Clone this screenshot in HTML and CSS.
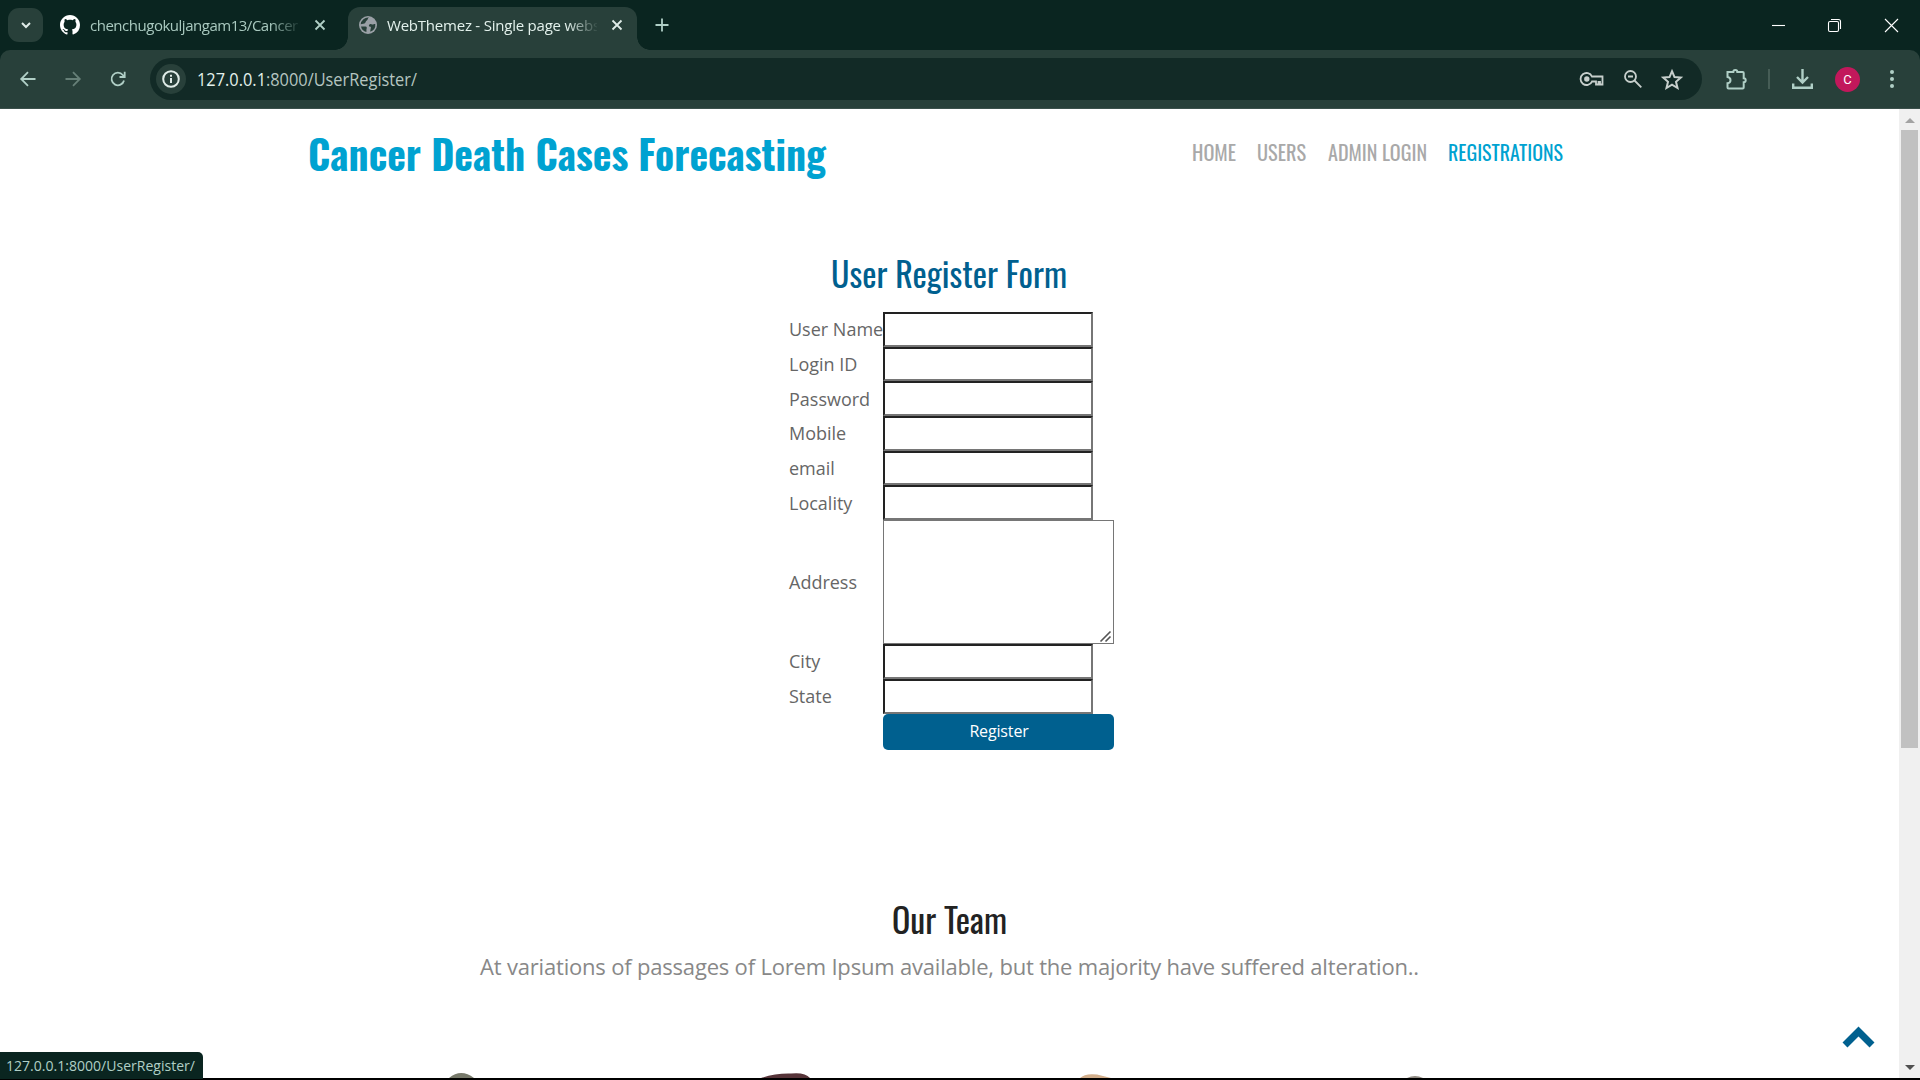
FILE: index.html
```html
<!DOCTYPE html>
<html lang="en">
<head>
<meta charset="utf-8">
<title>WebThemez - Single page website</title>
<link rel="stylesheet" href="styles.css">
</head>
<body>
<div class="window">
  <header class="tabstrip">
    <div class="tab-search"><svg width="12" height="12" viewBox="0 0 12 12"><path d="M2 4l4 4 4-4" class="line light w2"/></svg></div>
    <div class="tab">
      <svg class="favicon" width="20" height="20" viewBox="0 0 16 16"><path fill="#fff" d="M8 0C3.58 0 0 3.58 0 8c0 3.54 2.29 6.53 5.47 7.59.4.07.55-.17.55-.38 0-.19-.01-.82-.01-1.49-2.01.37-2.53-.49-2.69-.94-.09-.23-.48-.94-.82-1.13-.28-.15-.68-.52-.01-.53.63-.01 1.08.58 1.23.82.72 1.21 1.87.87 2.33.66.07-.52.28-.87.51-1.07-1.78-.2-3.64-.89-3.64-3.95 0-.87.31-1.59.82-2.15-.08-.2-.36-1.02.08-2.12 0 0 .67-.21 2.2.82.64-.18 1.32-.27 2-.27s1.36.09 2 .27c1.53-1.04 2.2-.82 2.2-.82.44 1.1.16 1.92.08 2.12.51.56.82 1.27.82 2.15 0 3.07-1.87 3.75-3.65 3.95.29.25.54.73.54 1.48 0 1.07-.01 1.93-.01 2.2 0 .21.15.46.55.38A8.01 8.01 0 0 0 16 8c0-4.42-3.58-8-8-8z"/></svg>
      <span class="tab-title first">chenchugokuljangam13/Cancer</span>
      <svg class="close" width="12" height="12" viewBox="0 0 12 12"><path d="M1.5 1.5l9 9M10.5 1.5l-9 9" class="line mint"/></svg>
    </div>
    <div class="tab active">
      <svg class="favicon" width="18" height="18" viewBox="0 0 18 18"><circle cx="9" cy="9" r="9" fill="#9aa0a6"/><path d="M10 1.6c-1.8 1-.8 2.300-2.500 3.200-1 .6-.6 2.200-2 2.600L1.700 8.300A7.400 7.400 0 0 1 10 1.600zM2 10.500h4.500c1.500.2 1.500 1.600 1 2.600-.3 1 .3 1.900-.2 3A7.400 7.400 0 0 1 2 10.500zM16.300 8c-1.400-.5-2 1-3.500.4-1.200-.6-2.300-.2-2.900.8-.2 1.300.9 1.400 1.900 1.600.5 1.500-.7 2.700-.5 4.900A7.400 7.400 0 0 0 16.300 8z" fill="#28403a"/></svg>
      <span class="tab-title">WebThemez - Single page website</span>
      <svg class="close" width="12" height="12" viewBox="0 0 12 12"><path d="M1.500 1.500l9 9M10.500 1.500l-9 9" class="line light"/></svg>
    </div>
    <svg class="new-tab" width="14" height="14" viewBox="0 0 14 14"><path d="M7 .5v13M.5 7h13" class="line mint"/></svg>
    <div class="window-controls">
      <svg width="13" height="13" viewBox="0 0 13 13"><path d="M0 6.500h13" class="line white w1"/></svg>
      <svg width="13" height="13" viewBox="0 0 13 13"><rect x=".5" y="2.500" width="10" height="10" rx="1.500" class="line white w1"/><path d="M3 .5h7.500a2 2 0 0 1 2 2V10" class="line white w1"/></svg>
      <svg width="13" height="13" viewBox="0 0 13 13"><path d="M0 0l13 13M13 0L0 13" class="line white w1"/></svg>
    </div>
  </header>

  <div class="toolbar">
    <div class="nav-buttons">
      <svg width="16" height="16" viewBox="0 0 16 16"><path d="M15.500 8H1.500M8 1.200L1.200 8 8 14.800" class="line mint"/></svg>
      <svg width="16" height="16" viewBox="0 0 16 16"><path d="M.5 8h14M8 1.200L14.800 8 8 14.800" class="line dim"/></svg>
      <svg width="16" height="16" viewBox="0 0 16 16"><path d="M14 9.500A6.300 6.300 0 1 1 12.800 4L14.500 6M14.700 .8V6H9.500" class="line mint"/></svg>
    </div>
    <div class="omnibox">
      <div class="site-info"><svg width="18" height="18" viewBox="0 0 18 18"><circle cx="9" cy="9" r="7.800" class="line light w2"/><path d="M9 8v5M9 4.700v2" class="line light w2"/></svg></div>
      <svg class="url" width="222" height="30"><text x="0" y="22" textLength="220" lengthAdjust="spacingAndGlyphs"><tspan fill="#e3f1ec">127.0.0.1</tspan>:8000/UserRegister/</text></svg>
      <div class="omni-icons">
        <svg width="24" height="16" viewBox="0 0 24 16"><path d="M12 5.500A6 6 0 1 0 12 10.500H16V13.500H18.500V11H20V13.500H22.500V5.500Z" class="line grey"/><circle cx="6.800" cy="8" r="2.700" fill="#c7cfcc"/></svg>
        <svg width="18" height="18" viewBox="0 0 18 18"><circle cx="6.500" cy="6.500" r="5.500" class="line grey"/><path d="M10.500 10.500l6.800 6.800M4 6.500h5" class="line grey"/></svg>
        <svg width="22" height="21" viewBox="0 0 22 21"><path d="M11 2.200l2.500 5.900 6.300.5-4.800 4.200 1.500 6.200-5.500-3.300L5.500 19 7 12.800 2.200 8.600l6.300-.5z" class="line grey w2"/></svg>
      </div>
    </div>
    <div class="actions">
      <svg width="21" height="21" viewBox="0 0 21 21"><path d="M1.500 3h5.800a2 2 0 0 1 4 0h5.400a1 1 0 0 1 1 1v5.200a2 2 0 0 1 0 4V18.500a1 1 0 0 1-1 1H2.500a1 1 0 0 1-1-1V14.200c4-.5 4-5.500 0-6.200V3z" class="line mint w2"/></svg>
      <i class="divider"></i>
      <svg width="21" height="21" viewBox="0 0 21 21"><path d="M10.500 0v13M5 8l5.500 5.500L16 8M1.200 14.500v4.300h18.600v-4.300" class="line mint w25"/></svg>
      <div class="avatar">C</div>
      <svg width="4" height="18" viewBox="0 0 4 18"><g fill="#b0cfc6"><circle cx="2" cy="2" r="2"/><circle cx="2" cy="9" r="2"/><circle cx="2" cy="16" r="2"/></g></svg>
    </div>
  </div>

  <div class="viewport">
    <main class="page">
      <div class="site-header">
        <svg class="brand" width="520" height="60"><text x="-1" y="42" textLength="518" lengthAdjust="spacingAndGlyphs">Cancer Death Cases Forecasting</text></svg>
        <nav class="menu">
          <svg width="43" height="30"><text x="-1" y="22" textLength="44" lengthAdjust="spacingAndGlyphs">HOME</text></svg>
          <svg width="48" height="30"><text x="-1" y="22" textLength="49" lengthAdjust="spacingAndGlyphs">USERS</text></svg>
          <svg width="98" height="30"><text x="-1" y="22" textLength="99" lengthAdjust="spacingAndGlyphs">ADMIN LOGIN</text></svg>
          <svg class="current" width="115" height="30"><text x="-1" y="22" textLength="115" lengthAdjust="spacingAndGlyphs">REGISTRATIONS</text></svg>
        </nav>
      </div>

      <section class="register">
        <svg class="heading blue" width="236" height="60"><text x="-1" y="40" textLength="236" lengthAdjust="spacingAndGlyphs">User Register Form</text></svg>
        <form class="form">
          <label>User Name</label><input type="text">
          <label>Login ID</label><input type="text">
          <label>Password</label><input type="password">
          <label>Mobile</label><input type="text">
          <label>email</label><input type="text">
          <label>Locality</label><input type="text">
          <label>Address</label>
          <div class="address"><textarea></textarea><svg class="grip" width="11" height="11" viewBox="0 0 11 11"><path d="M.5 10.500l10-10M5.500 10.500l5-5" stroke="#555" stroke-width="1.600"/></svg></div>
          <label>City</label><input type="text">
          <label>State</label><input type="text">
          <button type="button">Register</button>
        </form>
      </section>

      <section class="team">
        <svg class="heading" width="116" height="60"><text x="0" y="40" textLength="115" lengthAdjust="spacingAndGlyphs">Our Team</text></svg>
        <p class="lead">At variations of passages of Lorem Ipsum available, but the majority have suffered alteration..</p>
      </section>

      <svg class="portraits" width="1100" height="6" viewBox="0 0 1100 6">
        <path d="M48 6Q60-4 73 6z" fill="#77796a"/>
        <path d="M360 6Q375 1 390 1.500 404 0 409 6z" fill="#563338"/>
        <path d="M679 6Q684 1 696 2.500L710 6z" fill="#d2ae8b"/>
        <path d="M1006 6Q1014 2 1022 6z" fill="#8d8881"/>
      </svg>
    </main>
    <div class="scrollbar">
      <svg width="10" height="5" viewBox="0 0 10 5"><path d="M0 5l5-5 5 5z" fill="#a3a3a3"/></svg>
      <div class="thumb"></div>
      <svg width="10" height="5" viewBox="0 0 10 5"><path d="M0 0l5 5 5-5z" fill="#505050"/></svg>
    </div>
    <svg class="to-top" width="33" height="21" viewBox="0 0 33 21"><path d="M3 18L16.500 4.500 30 18" fill="none" stroke="#00608f" stroke-width="7"/></svg>
    <div class="status"><svg width="190" height="26"><text x="0" y="19" textLength="189" lengthAdjust="spacingAndGlyphs">127.0.0.1:8000/UserRegister/</text></svg></div>
  </div>
</div>
</body>
</html>
```
FILE: styles.css
```css
* { box-sizing: border-box; }
body { margin: 0; background: #000; overflow: hidden; font-family: "Open Sans", sans-serif; }
svg { display: block; flex: none; overflow: visible; }
.window { width: 1920px; height: 1080px; display: flex; flex-direction: column; padding-bottom: 2px; background: linear-gradient(#0a2520 70px, #000 70px); }

.line { fill: none; stroke-width: 1.8; }
.w1 { stroke-width: 1.1; }
.w2 { stroke-width: 2; }
.w25 { stroke-width: 2.4; }
.light { stroke: #e0ece8; }
.mint { stroke: #b0cfc6; }
.white { stroke: #fff; }
.grey { stroke: #c7cfcc; }
.dim { stroke: #667f77; }

.tabstrip { height: 50px; background: #0a2520; display: flex; align-items: center; padding-left: 8px; flex: none; position: relative; z-index: 1; }
.tab-search { width: 35px; height: 34px; border-radius: 11px; background: #28403a; display: flex; align-items: center; justify-content: center; }
.tab { display: flex; align-items: center; height: 43px; width: 305px; padding-left: 17px; margin-top: 7px; padding-bottom: 7px; color: #a9c9bf; align-self: flex-start; }
.tab-title { width: 210px; margin-left: 10px; font: 15px/24px "Open Sans", sans-serif; letter-spacing: -.22px; white-space: nowrap; overflow: hidden; -webkit-mask-image: linear-gradient(90deg, #000 180px, transparent 212px); mask-image: linear-gradient(90deg, #000 180px, transparent 212px); }
.tab-title.first { letter-spacing: -.48px; }
.close { margin-left: 14px; }
.tab.active { width: 289px; padding-left: 11px; background: #28403a; border-radius: 12px 12px 0 0; color: #e3f1ec; position: relative; }
.tab.active::before, .tab.active::after { content: ""; position: absolute; bottom: 0; width: 13px; height: 13px; }
.tab.active::before { left: -13px; background: radial-gradient(circle at 0 0, transparent 12.5px, #28403a 13px); }
.tab.active::after { right: -13px; background: radial-gradient(circle at 100% 0, transparent 12.5px, #28403a 13px); }
.new-tab { margin-left: 18px; }
.window-controls { margin-left: auto; display: flex; gap: 44px; padding-right: 22px; }
.window-controls svg:first-child { margin-right: -1px; }

.toolbar { height: 59px; flex: none; background: #28403a; border-radius: 10px 10px 0 0; border-bottom: 1px solid #3b504b; display: flex; align-items: center; padding: 0 26px 0 20px; }
.nav-buttons { display: flex; gap: 29px; width: 130px; }
.omnibox { width: 1552px; height: 42px; border-radius: 21px; background: #122a26; display: flex; align-items: center; padding: 0 19px 0 6px; }
.site-info { width: 30px; height: 30px; border-radius: 50%; background: #28403a; display: flex; align-items: center; justify-content: center; }
.url { margin-left: 11px; }
.url text { font-size: 18px; fill: #b5c5c0; }
.omni-icons { margin-left: auto; display: flex; gap: 19.5px; align-items: center; }
.actions { flex: 1; display: flex; align-items: center; padding-left: 24px; }
.divider { width: 2px; height: 20px; background: #465d56; margin: 0 22px 0 21px; }
.avatar { width: 25px; height: 25px; margin-left: 22px; border-radius: 50%; background: #c2185b; color: #fff; font: 13px/25px Roboto, sans-serif; text-align: center; }
.actions > svg:last-child { margin-left: auto; }

.viewport { flex: 1; display: flex; position: relative; background: #fff; min-height: 0; }
.page { flex: 1; display: flex; flex-direction: column; align-items: center; overflow: hidden; }
.site-header { width: 1281px; height: 139px; display: flex; justify-content: space-between; padding: 20px 26px 0 0; }
.brand text, .menu text, .heading text { font-family: Oswald, Roboto, sans-serif; }
.brand text { font-size: 40px; font-weight: 700; fill: #00a2d1; }
.menu { display: flex; gap: 22.5px; padding-top: 10px; }
.menu text { font-size: 20.5px; fill: #a9a9a9; }
.menu .current text { fill: #00a2d1; }
.heading text { font-size: 34px; font-weight: 400; fill: #222; }
.heading.blue text { fill: #00608f; }
.register { height: 648px; display: flex; flex-direction: column; align-items: center; }
.form { width: 324px; margin: 4.3px 0 0 5px; display: grid; grid-template-columns: 93px 231px; grid-template-rows: repeat(6, 34.67px) 124px 35px 35px 36px; align-items: center; justify-items: start; font-size: 18px; color: #666; }
.form label { line-height: 26px; white-space: nowrap; margin-left: -1px; }
.form input { width: 210px; height: 100%; border: 2px solid; border-color: #222 #767676 #767676 #222; background: #fff; margin: 0; padding: 0; outline: 0; }
.address { position: relative; width: 231px; height: 124px; }
.form textarea { display: block; width: 100%; height: 100%; border: 1px solid #767676; margin: 0; resize: none; background: #fff; }
.grip { position: absolute; right: 3px; bottom: 2px; }
.form button { grid-column: 2; width: 231px; height: 36px; border: 0; border-radius: 5px; background: #00608f; color: #fff; font: 16px/24px "Open Sans", sans-serif; letter-spacing: -.15px; padding: 0 0 2px 1px; }
.team { display: flex; flex-direction: column; align-items: center; height: 168px; }
.lead { margin: -5px 0 0; font-size: 22px; letter-spacing: -.19px; line-height: 34px; color: #888; white-space: nowrap; }
.portraits { margin: 10px 0 0 3px; }

.scrollbar { width: 21px; background: #f0f0f0; display: flex; flex-direction: column; align-items: center; padding: 9px 0 8px; }
.scrollbar .thumb { width: 17px; height: 618px; margin: 7px 0 auto; background: #c1c1c1; }
.to-top { position: absolute; left: 1842px; top: 918px; }
.status { position: absolute; left: 0; bottom: -1px; width: 203px; height: 27px; background: #0a2520; border-radius: 0 5px 0 0; padding-left: 6px; }
.status text { font-size: 15px; fill: #b0cfc6; }
```
